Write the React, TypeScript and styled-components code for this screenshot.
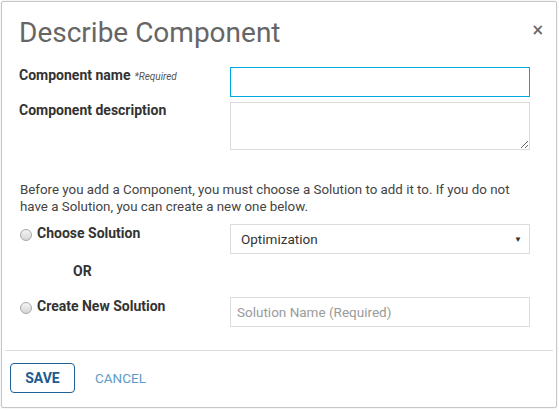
import React from "react";
import styled, { createGlobalStyle } from "styled-components";

const GlobalStyle = createGlobalStyle`
  html, body { margin: 0; padding: 0; background: #ffffff; }
  body { font-family: Roboto, "Liberation Sans", Arial, sans-serif; }
  * { box-sizing: border-box; }
`;

const Modal = styled.div`
  width: 556px;
  height: 407px;
  margin: 1px;
  border: 1px solid #c6c6c6;
  border-radius: 2px;
  box-shadow: 0 0 2px rgba(0, 0, 0, 0.12);
  background: #fff;
  display: flex;
  flex-direction: column;
`;

const Header = styled.div`
  display: flex;
  align-items: flex-start;
  justify-content: space-between;
  padding: 14px 12px 0 17px;
`;

const Title = styled.h1`
  margin: 0;
  font-size: 28px;
  line-height: 33px;
  font-weight: 400;
  color: #666666;
`;

const Close = styled.button`
  border: none;
  background: none;
  padding: 0;
  margin-top: 4px;
  font-family: "DejaVu Sans", sans-serif;
  font-size: 15px;
  line-height: 20px;
  font-weight: 700;
  color: #6a6a6a;
  cursor: pointer;
`;

const Body = styled.div`
  padding: 18px 28px 0 17px;
  display: flex;
  flex-direction: column;
`;

const Row = styled.div<{ $mt?: number }>`
  display: grid;
  grid-template-columns: 211px 300px;
  align-items: start;
  margin-top: ${(p) => p.$mt ?? 0}px;
`;

const Label = styled.label`
  display: flex;
  align-items: baseline;
  gap: 4px;
  padding-top: 0px;
  font-size: 14px;
  line-height: 17px;
  font-weight: 700;
  color: #333333;
`;

const Required = styled.span`
  font-size: 10px;
  font-style: italic;
  font-weight: 400;
  color: #555;
`;

const TextInput = styled.input<{ $focused?: boolean }>`
  width: 300px;
  height: 30px;
  border: 1px solid ${(p) => (p.$focused ? "#00a8e0" : "#dcdcdc")};
  border-radius: 0;
  outline: none;
  padding: 0 6px;
  font-family: Roboto, "Liberation Sans", Arial, sans-serif;
  font-size: 13.5px;
  color: #333;
  background: #fff;
  &::placeholder { color: #9a9a9a; }
`;

const TextArea = styled.textarea`
  width: 300px;
  height: 48px;
  border: 1px solid #dcdcdc;
  border-radius: 0;
  outline: none;
  padding: 6px;
  font-family: Roboto, "Liberation Sans", Arial, sans-serif;
  font-size: 13.5px;
  resize: vertical;
  display: block;
`;

const Intro = styled.p`
  margin: 31px 0 0 0;
  padding-left: 1px;
  font-size: 13.33px;
  line-height: 17px;
  color: #444444;
  width: 515px;
`;

const RadioLabel = styled.label`
  display: flex;
  align-items: center;
  gap: 5px;
  padding-top: 1px;
  padding-left: 1px;
  font-size: 14px;
  line-height: 17px;
  font-weight: 700;
  color: #333;
`;

const RadioDot = styled.span`
  width: 12px;
  height: 12px;
  border-radius: 50%;
  border: 1px solid #a8a8a8;
  background: linear-gradient(#f4f4f4, #d6d6d6);
  margin-top: 2px;
  flex: none;
`;

const SelectBox = styled.div`
  width: 300px;
  height: 30px;
  border: 1px solid #dcdcdc;
  display: flex;
  align-items: center;
  justify-content: space-between;
  padding: 0 7px 0 10px;
  font-size: 13.5px;
  color: #333;
`;

const Caret = styled.span`
  font-size: 8px;
  color: #333;
`;

const Or = styled.div`
  margin: 9px 0 0 54px;
  font-size: 14px;
  line-height: 17px;
  font-weight: 700;
  color: #333;
`;

const Divider = styled.hr`
  margin: 23px 3px 0 3px;
  border: none;
  border-top: 1px solid #dddddd;
`;

const Footer = styled.div`
  display: flex;
  align-items: center;
  gap: 20px;
  padding: 12px 0 0 8px;
`;

const SaveButton = styled.button`
  width: 65px;
  height: 30px;
  border: 1.5px solid #1d6196;
  border-radius: 4px;
  background: #fff;
  color: #1b5b8e;
  font-family: Roboto, "Liberation Sans", Arial, sans-serif;
  font-size: 14px;
  font-weight: 700;
  cursor: pointer;
`;

const CancelButton = styled.button`
  border: none;
  background: none;
  padding: 0;
  color: #5e9cc8;
  font-family: Roboto, "Liberation Sans", Arial, sans-serif;
  font-size: 13.5px;
  font-weight: 400;
  cursor: pointer;
`;

export default function App() {
  return (
    <>
      <GlobalStyle />
      <Modal>
        <Header>
          <Title>Describe Component</Title>
          <Close aria-label="Close">×</Close>
        </Header>
        <Body>
          <Row>
            <Label>
              Component name <Required>*Required</Required>
            </Label>
            <TextInput $focused />
          </Row>
          <Row $mt={5}>
            <Label>Component description</Label>
            <TextArea />
          </Row>
          <Intro>
            Before you add a Component, you must choose a Solution to add it to. If you do not
            have a Solution, you can create a new one below.
          </Intro>
          <Row $mt={9}>
            <RadioLabel>
              <RadioDot />
              Choose Solution
            </RadioLabel>
            <SelectBox>
              <span>Optimization</span>
              <Caret>▼</Caret>
            </SelectBox>
          </Row>
          <Or>OR</Or>
          <Row $mt={17}>
            <RadioLabel>
              <RadioDot />
              Create New Solution
            </RadioLabel>
            <TextInput placeholder="Solution Name (Required)" />
          </Row>
        </Body>
        <Divider />
        <Footer>
          <SaveButton>SAVE</SaveButton>
          <CancelButton>CANCEL</CancelButton>
        </Footer>
      </Modal>
    </>
  );
}
